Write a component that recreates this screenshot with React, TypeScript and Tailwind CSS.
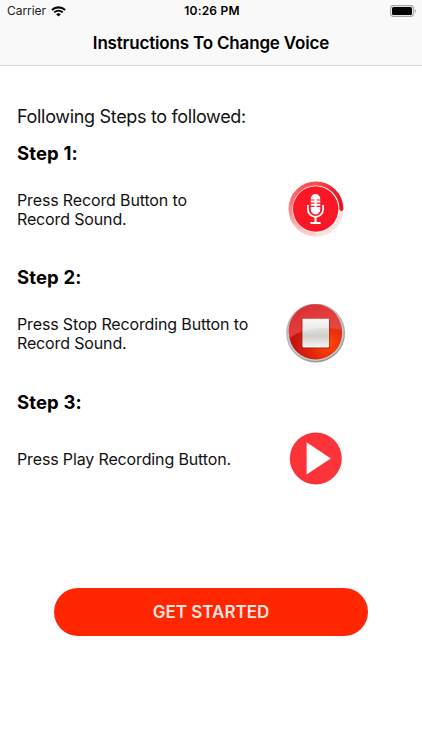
import type { ReactNode } from "react";

function WifiIcon() {
  return (
    <svg width="15" height="11" viewBox="0 0 15 11" fill="none">
      <path d="M.9 4C4.6 .5 10.4 .5 14.1 4" stroke="#000" strokeWidth="2.1" />
      <path d="M3.2 6.4C5.7 4.2 9.3 4.2 11.8 6.4" stroke="#000" strokeWidth="1.8" />
      <path d="M5.1 8.2C6.5 7 8.5 7 9.9 8.2L7.5 10.6Z" fill="#000" />
    </svg>
  );
}

function BatteryIcon() {
  return (
    <svg width="27" height="12" viewBox="0 0 27 12">
      <rect x=".6" y=".6" width="22.8" height="10.8" rx="2.8" fill="none" stroke="#a3a3a3" strokeWidth="1.1" />
      <rect x="2" y="2" width="20" height="8" rx="1.5" fill="#000" />
      <path d="M24.7 4C26.4 4.6 26.4 7.4 24.7 8Z" fill="#a3a3a3" />
    </svg>
  );
}

function RecordIcon() {
  return (
    <svg width="60" height="60" viewBox="0 0 60 60">
      <defs>
        <linearGradient id="ringLeft" x1="0" y1="0" x2="0" y2="1">
          <stop offset="0" stopColor="#fb4d52" />
          <stop offset=".5" stopColor="#fd8588" />
          <stop offset="1" stopColor="#ffd0d2" />
        </linearGradient>
        <linearGradient id="ringTop" x1="0" y1="0" x2="1" y2="0">
          <stop offset="0" stopColor="#fb4d52" />
          <stop offset="1" stopColor="#e81420" />
        </linearGradient>
      </defs>
      <path d="M30 3.5A25.5 25.5 0 0 0 30 54.5" fill="none" stroke="url(#ringLeft)" strokeWidth="4" />
      <path d="M30 54.5A25.5 25.5 0 0 0 55.4 31" fill="none" stroke="#ffe0e1" strokeWidth="4" />
      <path d="M29.8 3.5A25.5 25.5 0 0 1 55.4 29" fill="none" stroke="url(#ringTop)" strokeWidth="4" />
      <circle cx="55.4" cy="29" r="2" fill="#e81420" />
      <circle cx="29.7" cy="29" r="22.7" fill="#fc1726" />
      <rect x="24.8" y="14" width="9.4" height="20.5" rx="4.7" fill="#fff" />
      <path d="M24.2 20h4.2M30.6 20h4.2M24.2 23.2h4.2M30.6 23.2h4.2M24.2 26.4h4.2M30.6 26.4h4.2" stroke="#fc1726" strokeWidth="1.2" />
      <path d="M21.9 25v4.2a7.6 7.6 0 0 0 15.2 0V25" fill="none" stroke="#fff" strokeWidth="1.8" />
      <path d="M29.5 36.5V43M24.4 43h10.2" stroke="#fff" strokeWidth="2" />
    </svg>
  );
}

function StopIcon() {
  return (
    <svg width="60" height="60" viewBox="0 0 60 60">
      <defs>
        <linearGradient id="rim" x1=".2" y1="0" x2=".8" y2="1">
          <stop offset="0" stopColor="#a2a7aa" />
          <stop offset=".35" stopColor="#b9bec0" />
          <stop offset=".75" stopColor="#a1a6a9" />
          <stop offset="1" stopColor="#8b9093" />
        </linearGradient>
        <radialGradient id="stopRed" cx=".74" cy=".7" r=".65">
          <stop offset="0" stopColor="#ff4a0c" />
          <stop offset=".5" stopColor="#e52a0b" />
          <stop offset="1" stopColor="#c41310" />
        </radialGradient>
        <linearGradient id="gloss" x1="0" y1="0" x2="1" y2="1">
          <stop offset="0" stopColor="#dc2a30" />
          <stop offset="1" stopColor="#e64f46" />
        </linearGradient>
        <linearGradient id="squareFill" x1="0" y1="0" x2="0" y2="1">
          <stop offset="0" stopColor="#f5f5f4" />
          <stop offset=".48" stopColor="#d8d9d6" />
          <stop offset=".6" stopColor="#cfd0cc" />
          <stop offset="1" stopColor="#f5f5f3" />
        </linearGradient>
      </defs>
      <g transform="translate(-.4 -1)">
        <circle cx="30" cy="30" r="29.5" fill="url(#rim)" />
        <circle cx="30" cy="30" r="28" fill="#c9ced0" />
        <circle cx="30" cy="30" r="26.6" fill="url(#stopRed)" />
        <path d="M4 35A26.6 26.6 0 1 1 56.2 27Q46 24.5 36 25Q15 26 4 35Z" fill="url(#gloss)" />
        <rect x="16" y="16.2" width="28" height="29.3" rx="1.2" fill="#8b170c" opacity=".7" />
        <rect x="16.8" y="15.8" width="26.6" height="28.6" rx=".8" fill="url(#squareFill)" />
        <path d="M17.3 16.3H43v8.5Q29 25 17.3 29Z" fill="#fff" opacity=".35" />
      </g>
    </svg>
  );
}

function PlayIcon() {
  return (
    <svg width="60" height="60" viewBox="0 0 60 60">
      <circle cx="29.8" cy="29.4" r="26" fill="#fc3338" />
      <path d="M20.6 13.2V45.6L44.8 29.4Z" fill="#fff" />
    </svg>
  );
}

function Step({ title, icon, children }: { title: string; icon: ReactNode; children: ReactNode }) {
  return (
    <section className="last:mt-px">
      <h2 className="text-[18.5px] leading-6 font-bold tracking-[0.13px]">{title}</h2>
      <div className="mt-[15px] flex h-[60px] items-center">
        <p className="w-[269px] text-[16px] leading-[19px] tracking-[-0.14px] whitespace-nowrap text-[#111]">{children}</p>
        {icon}
      </div>
    </section>
  );
}

export default function App() {
  return (
    <div className="flex h-[750px] w-[422px] flex-col bg-white font-['Inter',sans-serif] text-black">
      <header className="h-[66px] border-b border-[#d9d9d9] bg-[#f9f9f9]">
        <div className="grid h-[22px] grid-cols-3 items-center pr-[5px] pl-[7px]">
          <div className="flex items-center gap-[5px] text-[12px] text-[#222]">
            <span className="tracking-[-0.05px]">Carrier</span>
            <WifiIcon />
          </div>
          <span className="text-center text-[12px] font-semibold tracking-[0.2px]">10:26 PM</span>
          <div className="flex justify-end"><BatteryIcon /></div>
        </div>
        <h1 className="text-center text-[17px] leading-[43px] font-semibold tracking-[-0.17px]">Instructions To Change Voice</h1>
      </header>
      <main className="flex flex-col px-[17px] pt-[39px]">
        <p className="text-[18px] leading-6 tracking-[-0.32px] text-[#111]">Following Steps to followed:</p>
        <div className="mt-3 flex flex-col gap-[25px]">
          <Step title="Step 1:" icon={<RecordIcon />}>Press Record Button to<br />Record Sound.</Step>
          <Step title="Step 2:" icon={<StopIcon />}>Press Stop Recording Button to<br />Record Sound.</Step>
          <Step title="Step 3:" icon={<PlayIcon />}><span className="block pt-px">Press Play Recording Button.</span></Step>
        </div>
        <button className="mt-[99px] ml-[37px] h-[48px] w-[314px] rounded-full bg-[#ff2600] pt-px text-[17px] font-semibold text-[#ffe5e0]">GET STARTED</button>
      </main>
    </div>
  );
}
